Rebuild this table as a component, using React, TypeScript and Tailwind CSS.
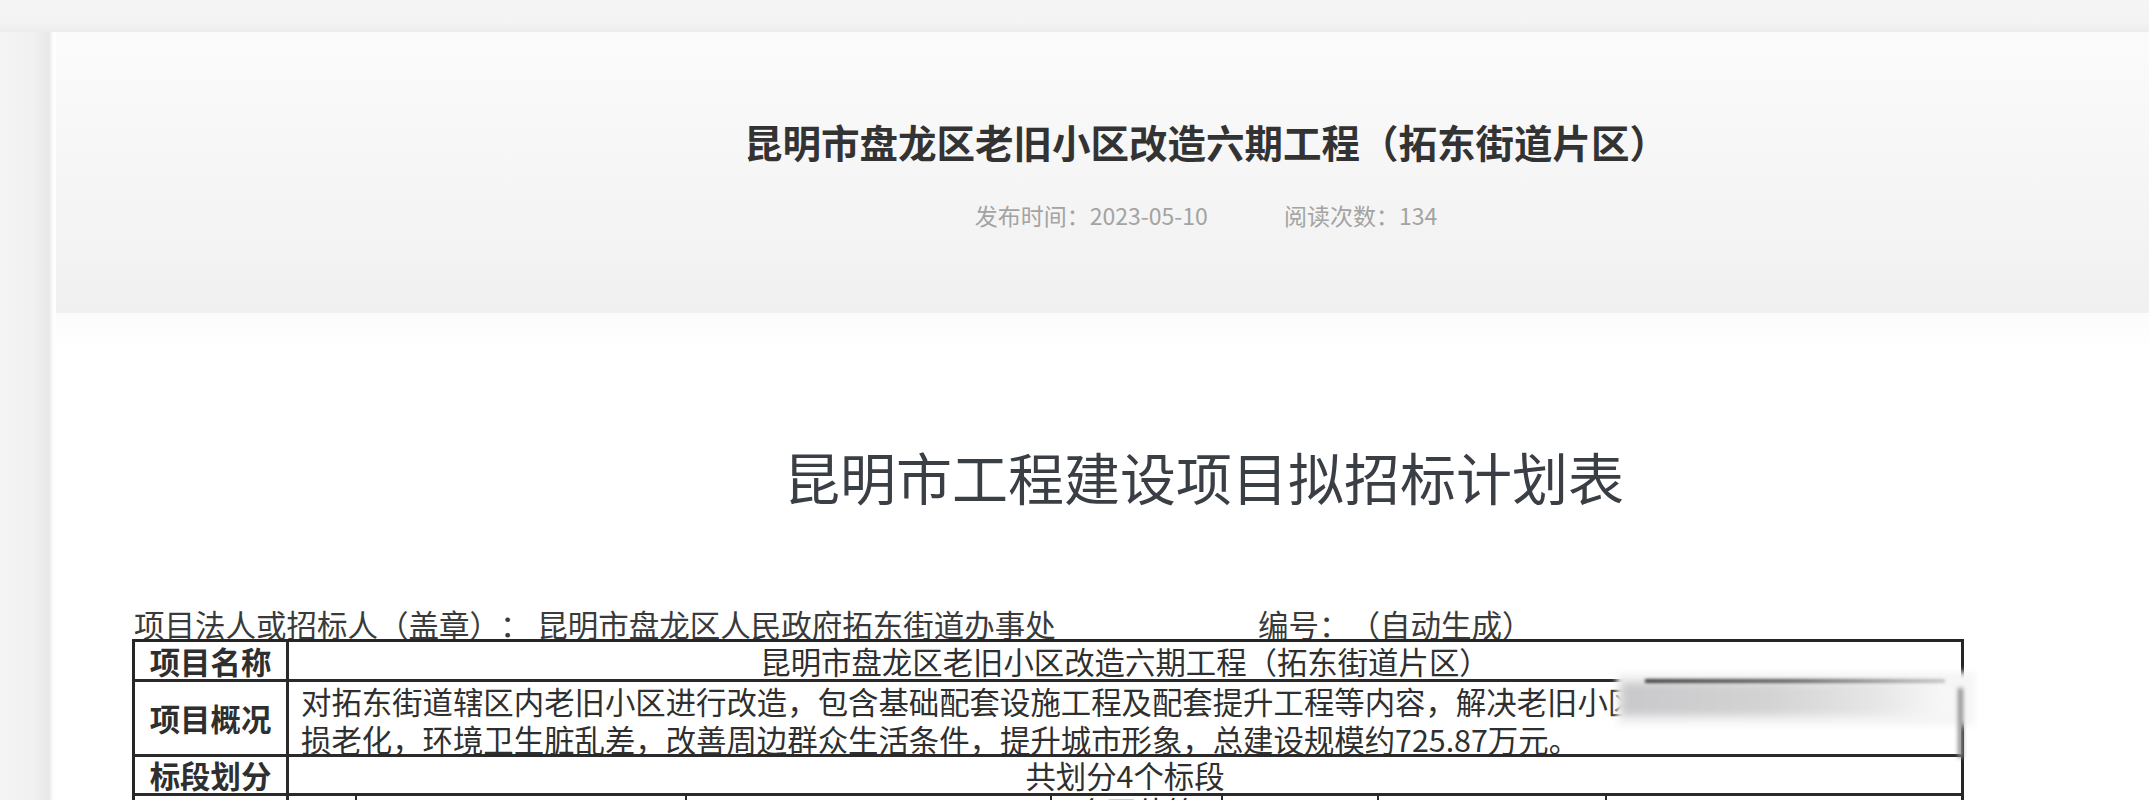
import React from "react";

const cjk = { fontFamily: '"Noto Sans CJK SC", "Noto Sans", sans-serif' };

export default function App() {
  const row4 = [68, 330, 365, 171, 156, 228, 355];
  return (
    <div
      className="relative w-[2149px] h-[800px] overflow-hidden bg-[#f4f4f4] [text-spacing-trim:space-all]"
      style={cjk}
    >
      <div className="h-[32px] bg-[linear-gradient(to_bottom,#f5f5f5,#f3f3f3_70%,#ececec)]" />
      <div className="flex">
        <div className="w-[56px] shrink-0 h-[768px] bg-[linear-gradient(to_right,#f4f4f4,#f0f0f0_60%,#e8e8e8_88%,#fbfbfb_94%,#ffffff)]" />
        <div className="w-[2286px] shrink-0 flex flex-col">
          {/* header */}
          <div className="h-[281px] bg-[linear-gradient(to_bottom,#fbfbfb,#f6f6f6_50%,#f0f0f0)] flex flex-col items-center pt-[87px] pl-[14px]">
            <div className="text-[38.5px] leading-[44px] font-bold text-[#333333] whitespace-nowrap">
              昆明市盘龙区老旧小区改造六期工程（拓东街道片区）
            </div>
            <div className="mt-[37px] flex gap-[76px] text-[23px] leading-[30px] text-[#a3a3a3] whitespace-nowrap">
              <span>发布时间：2023-05-10</span>
              <span>阅读次数：134</span>
            </div>
          </div>
          {/* body */}
          <div className="bg-[linear-gradient(to_bottom,#fbfbfb,#ffffff_40px)] h-[487px] pl-[76px]">
            <div className="pt-[131px] w-[2152px] flex justify-center">
              <div className="text-[56px] leading-[64px] text-[#3a3f46] whitespace-nowrap pr-[8px]">
                昆明市工程建设项目拟招标计划表
              </div>
            </div>
            <div className="mt-[99px] flex text-[30.5px] leading-[34px] text-[#3a3a3a] whitespace-nowrap pl-[2px]">
              <span className="w-[1124px]">项目法人或招标人（盖章）： 昆明市盘龙区人民政府拓东街道办事处</span>
              <span>编号：（自动生成）</span>
            </div>
            <div className="relative mt-[-2px] w-[1832px] border-[3px] border-b-0 border-[#262626] text-[30.4px] text-[#2f2f2f]">
              {/* row 1 */}
              <div className="flex h-[40px] border-b-[3px] border-[#2a2a2a]">
                <div className="w-[154px] shrink-0 border-r-[3px] border-[#2a2a2a] flex items-center justify-center font-bold leading-[36px]">
                  项目名称
                </div>
                <div className="flex-1 flex items-center justify-center leading-[36px] whitespace-nowrap">
                  昆明市盘龙区老旧小区改造六期工程（拓东街道片区）
                </div>
              </div>
              {/* row 2 */}
              <div className="flex h-[75px] border-b-[3px] border-[#2a2a2a]">
                <div className="w-[154px] shrink-0 border-r-[3px] border-[#2a2a2a] flex items-center justify-center font-bold leading-[36px]">
                  项目概况
                </div>
                <div className="flex-1 pl-[12px] leading-[38px] whitespace-nowrap overflow-hidden">
                  <div>对拓东街道辖区内老旧小区进行改造，包含基础配套设施工程及配套提升工程等内容，解决老旧小区基础设施破</div>
                  <div>损老化，环境卫生脏乱差，改善周边群众生活条件，提升城市形象，总建设规模约725.87万元。</div>
                </div>
              </div>
              {/* row 3 */}
              <div className="flex h-[39px] border-b-[3px] border-[#2a2a2a]">
                <div className="w-[154px] shrink-0 border-r-[3px] border-[#2a2a2a] flex items-center justify-center font-bold leading-[36px]">
                  标段划分
                </div>
                <div className="flex-1 flex items-center justify-center leading-[36px] whitespace-nowrap">
                  共划分4个标段
                </div>
              </div>
              {/* row 4 */}
              <div className="flex h-[40px]">
                <div className="w-[154px] shrink-0 border-r-[3px] border-[#2a2a2a]" />
                {row4.map((w, i) => (
                  <div
                    key={i}
                    className={
                      i < row4.length - 1
                        ? "shrink-0 border-r-[2px] border-[#2a2a2a] flex justify-center leading-[30px]"
                        : "flex-1 flex justify-center leading-[30px]"
                    }
                    style={i < row4.length - 1 ? { width: w } : undefined}
                  >
                    {i === 3 ? "合同估算" : ""}
                  </div>
                ))}
              </div>
              {/* blurred smudge */}
              <div className="absolute left-[1482px] top-[30px] w-[358px] h-[54px] bg-[#f6f6f6] blur-[3px]" />
              <div className="absolute left-[1486px] top-[40px] w-[326px] h-[34px] bg-[linear-gradient(to_right,#c9c9cc,#d3d3d3_45%,#e6e6e6_78%,#f8f8f8)] blur-[4px]" />
              <div className="absolute left-[1510px] top-[37px] w-[300px] h-[4px] bg-[linear-gradient(to_right,#444,#666_50%,#c6c6c6)] blur-[1.5px]" />
              <div className="absolute left-[1823px] top-[46px] w-[5px] h-[70px] bg-[#8f8f8f] blur-[2px]" />
            </div>
          </div>
        </div>
      </div>
    </div>
  );
}
